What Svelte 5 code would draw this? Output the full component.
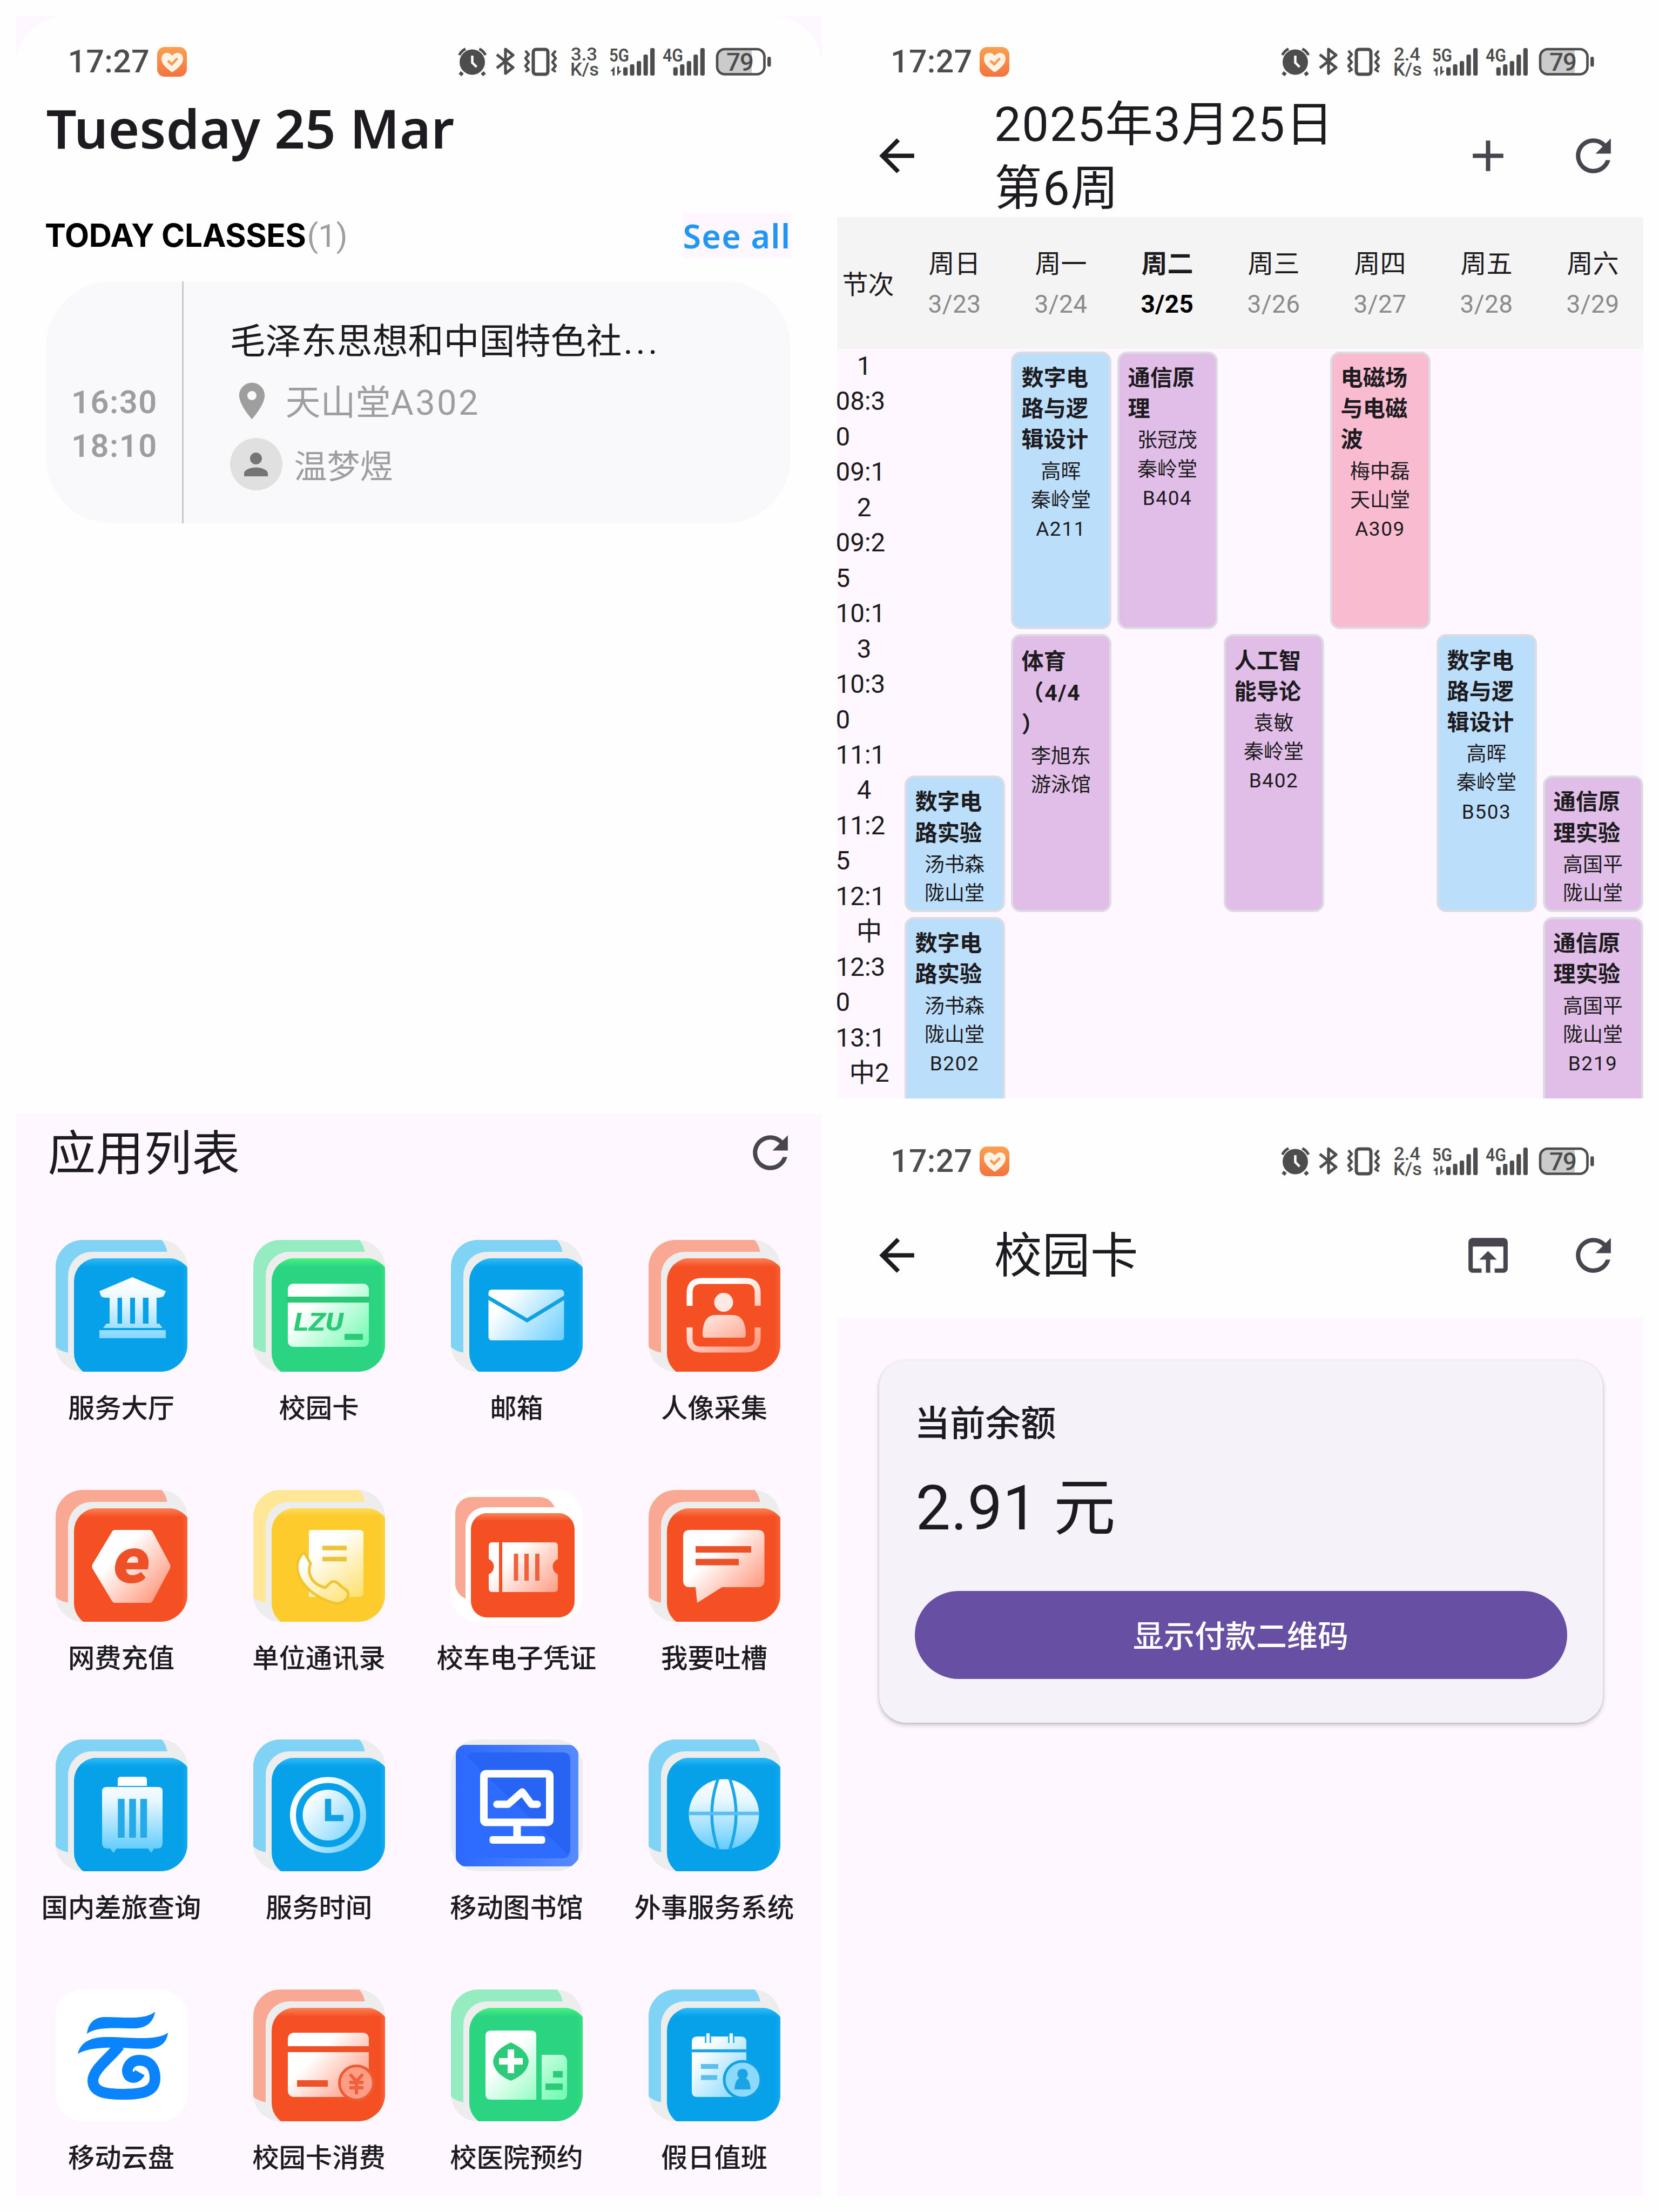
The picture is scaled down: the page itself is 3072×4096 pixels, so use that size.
<script>
  const days = [
    { name: '周日', date: '3/23' },
    { name: '周一', date: '3/24' },
    { name: '周二', date: '3/25', today: true },
    { name: '周三', date: '3/26' },
    { name: '周四', date: '3/27' },
    { name: '周五', date: '3/28' },
    { name: '周六', date: '3/29' }
  ];

  const periods = [
    { label: '1', lines: ['08:3', '0', '09:1'] },
    { label: '2', lines: ['09:2', '5', '10:1'] },
    { label: '3', lines: ['10:3', '0', '11:1'] },
    { label: '4', lines: ['11:2', '5', '12:1'] },
    { label: '中', wide: true, lines: ['12:3', '0', '13:1'] },
    { label: '中2', wide: true, lines: [] }
  ];

  const lessons = [
    { col: 2, row: 1, span: 2, tone: 'blue', title: ['数字电', '路与逻', '辑设计'], info: ['高晖', '秦岭堂', 'A211'] },
    { col: 3, row: 1, span: 2, tone: 'purple', title: ['通信原', '理'], info: ['张冠茂', '秦岭堂', 'B404'] },
    { col: 5, row: 1, span: 2, tone: 'pink', title: ['电磁场', '与电磁', '波'], info: ['梅中磊', '天山堂', 'A309'] },
    { col: 2, row: 3, span: 2, tone: 'purple', tall: true, title: ['体育', '（4/4', '）'], info: ['李旭东', '游泳馆'] },
    { col: 4, row: 3, span: 2, tone: 'purple', title: ['人工智', '能导论'], info: ['袁敏', '秦岭堂', 'B402'] },
    { col: 6, row: 3, span: 2, tone: 'blue', title: ['数字电', '路与逻', '辑设计'], info: ['高晖', '秦岭堂', 'B503'] },
    { col: 1, row: 4, span: 1, tone: 'blue', title: ['数字电', '路实验'], info: ['汤书森', '陇山堂'] },
    { col: 7, row: 4, span: 1, tone: 'purple', title: ['通信原', '理实验'], info: ['高国平', '陇山堂'] },
    { col: 1, row: 5, span: 2, tone: 'blue', title: ['数字电', '路实验'], info: ['汤书森', '陇山堂', 'B202'] },
    { col: 7, row: 5, span: 2, tone: 'purple', title: ['通信原', '理实验'], info: ['高国平', '陇山堂', 'B219'] }
  ];

  const palette = {
    blue: { back: '#80d3f4', front: '#06a1e9', edge: '#2ebcf9' },
    green: { back: '#95ecc0', front: '#2ad480', edge: '#46f480' },
    orange: { back: '#f9a993', front: '#f45024', edge: '#fb8155' },
    yellow: { back: '#ffe797', front: '#fdcb2c', edge: '#fedc58' }
  };

  const apps = [
    { name: '服务大厅', icon: 'bank', tone: 'blue' },
    { name: '校园卡', icon: 'card', tone: 'green' },
    { name: '邮箱', icon: 'mail', tone: 'blue' },
    { name: '人像采集', icon: 'face', tone: 'orange' },
    { name: '网费充值', icon: 'net', tone: 'orange' },
    { name: '单位通讯录', icon: 'contacts', tone: 'yellow' },
    { name: '校车电子凭证', icon: 'ticket' },
    { name: '我要吐槽', icon: 'chat', tone: 'orange' },
    { name: '国内差旅查询', icon: 'luggage', tone: 'blue' },
    { name: '服务时间', icon: 'clock', tone: 'blue' },
    { name: '移动图书馆', icon: 'library' },
    { name: '外事服务系统', icon: 'globe', tone: 'blue' },
    { name: '移动云盘', icon: 'cloud' },
    { name: '校园卡消费', icon: 'spend', tone: 'orange' },
    { name: '校医院预约', icon: 'hospital', tone: 'green' },
    { name: '假日值班', icon: 'duty', tone: 'blue' }
  ];

  const bars = [15.5, 21, 27, 39, 51];
</script>

{#snippet statusBar(speed)}
  <div class="status">
    <span class="clock">17:27</span>
    <svg class="health" viewBox="0 0 55 55">
      <rect width="55" height="55" rx="14" fill="url(#gHealth)" />
      <path d="M28 47C20 41 8 33 8 21.500C8 15 12.500 11 18 11C22 11 26 13 28 16.500C30 13 34 11 38 11C43.500 11 48 15 48 21.500C48 33 36 41 28 47Z" fill="#fff3e6" />
      <path d="M20 25.500L27 32L37.500 21" fill="none" stroke="#f99a50" stroke-width="4.500" />
    </svg>
    <svg class="indicators" viewBox="848 76 582 76" fill="#4d4d4d">
      <path d="M856 134l-4 5M893 134l4 5" stroke="#4d4d4d" stroke-width="7" />
      <circle cx="874.500" cy="115" r="23.500" />
      <path d="M850.500 102A25 25 0 0 1 862 90.500M899 102A25 25 0 0 0 887.500 90.500" fill="none" stroke="#4d4d4d" stroke-width="5" />
      <path d="M874.500 103v13l8 8" fill="none" stroke="#fefefe" stroke-width="4.500" />
      <path d="M920 101L950 125L936 136V91L950 102L920 126" fill="none" stroke="#4d4d4d" stroke-width="5.200" stroke-linejoin="round" />
      <rect x="987.500" y="91.500" width="27" height="46" rx="5" fill="none" stroke="#4d4d4d" stroke-width="6" />
      <path d="M973 94l6 7-6 7 6 7-6 7 6 7-6 4M1029 94l-6 7 6 7-6 7 6 7-6 7 6 4" fill="none" stroke="#4d4d4d" stroke-width="4.500" stroke-linejoin="round" />
      <text x="1057" y="112" font-size="34" font-weight="500" textLength="49" lengthAdjust="spacingAndGlyphs">{speed}</text>
      <text x="1056" y="140" font-size="34" font-weight="500" textLength="53" lengthAdjust="spacingAndGlyphs">K/s</text>
      <text x="1128" y="114" font-size="34" font-weight="600" textLength="37" lengthAdjust="spacingAndGlyphs">5G</text>
      <path d="M1130 132l8-9v17h-3.500v-8zM1151 131l-8 9v-17h3.500v8z" />
      <text x="1227" y="114" font-size="34" font-weight="600" textLength="38" lengthAdjust="spacingAndGlyphs">4G</text>
      {#each bars as h, i}
        <rect x={1154 + i * 12.5} y={140 - h} width="8.200" height={h} rx="3" />
        <rect x={1246.7 + i * 12.5} y={140 - h} width="8.200" height={h} rx="3" />
      {/each}
      <path d="M1342 91h50v46h-50q-13 0-13-13v-20q0-13 13-13z" fill="#cbcbcb" />
      <rect x="1328" y="91" width="87.500" height="46.500" rx="14" fill="none" stroke="#4d4d4d" stroke-width="4.600" />
      <rect x="1421" y="105" width="6.500" height="18.500" rx="3.200" />
      <text x="1345" y="130.500" font-size="46" font-weight="500" textLength="51">79</text>
    </svg>
  </div>
{/snippet}

{#snippet backIcon()}
  <svg class="tool dark" viewBox="0 0 24 24"><path d="M20 11H7.830l5.590-5.590L12 4l-8 8 8 8 1.410-1.410L7.830 13H20v-2z" /></svg>
{/snippet}

{#snippet refreshIcon()}
  <svg class="tool" viewBox="0 0 24 24"><path d="M17.650 6.350C16.200 4.900 14.210 4 12 4c-4.420 0-7.990 3.580-7.990 8s3.570 8 7.990 8c3.730 0 6.840-2.550 7.730-6h-2.080c-.820 2.330-3.040 4-5.650 4-3.310 0-6-2.690-6-6s2.690-6 6-6c1.660 0 3.140.690 4.220 1.780L13 11h7V4l-2.350 2.350z" /></svg>
{/snippet}

{#snippet glyph(icon)}
  {#if icon === 'bank'}
    <g fill="url(#gBlueV)">
      <path d="M142 69L204 95L200 104Q196 107 190 107H94Q87 107 84 104L81 95ZM100 107h14.600v50H100zM123 107h15v50h-15zM147 107h14.600v50H147zM172 107h15v50h-15zM94 155h98l6 8H88zM81 167h123v15H81z" />
    </g>
  {:else if icon === 'card'}
    <rect x="64" y="81" width="150" height="117" rx="10" fill="url(#gGreenD)" />
    <rect x="62" y="105" width="154" height="11" fill="#2bc878" />
    <text x="75" y="168" font-size="46" font-weight="800" font-style="italic" fill="#2cc979" textLength="92" lengthAdjust="spacingAndGlyphs">LZU</text>
    <rect x="169" y="174" width="34" height="11" fill="#2cc979" />
  {:else if icon === 'mail'}
    <rect x="69.500" y="92" width="140" height="94" rx="6" fill="url(#gBlueD)" />
    <path d="M66 105L141 149L213 105" fill="none" stroke="#12a0e4" stroke-width="7" />
  {:else if icon === 'face'}
    <path d="M76 122V98Q76 76 98 76H180Q202 76 202 98V122M76 162V182Q76 203 98 203H180Q202 203 202 182V162" fill="none" stroke="url(#gOrangeU)" stroke-width="11" />
    <circle cx="139" cy="115.500" r="17.500" fill="#ffe9e3" />
    <path d="M100 176Q100 139 124 139H155Q180 139 180 176Q180 181 175 181H105Q100 181 100 176Z" fill="url(#gOrangeU)" />
  {:else if icon === 'net'}
    <path d="M110 74H174Q178 74 180 78L212 138Q213 141 212 145L180 205Q178 209 174 209H110Q106 209 104 205L68 145Q67 141 68 138L104 78Q106 74 110 74Z" fill="url(#gOrangeD)" />
    <text x="107" y="172" font-size="119" font-weight="900" font-style="italic" fill="#ee5127" textLength="68" lengthAdjust="spacingAndGlyphs">e</text>
  {:else if icon === 'contacts'}
    <path d="M107 74H197Q204 74 204 81V190Q204 198 196 198H103V78Q103 74 107 74Z" fill="url(#gYellowD)" />
    <path d="M128 107.500h45M128 128h45" stroke="#ebc33d" stroke-width="8.500" />
    <path d="M94 115L106 136Q101 150 106 160Q112 175 133 181L145 170Q153 168 160 176L175 188Q178 200 168 206Q160 212 148 209Q106 196 88 166Q72 136 94 115Z" fill="url(#gYellowD)" stroke="#f0c531" stroke-width="5" />
  {:else if icon === 'chat'}
    <path d="M76 74H202Q214.500 74 214.500 86V168Q214.500 180 202 180H136L90 209L87 180H76Q64 180 64 168V86Q64 74 76 74Z" fill="url(#gOrangeD)" />
    <path d="M87 110h103M87 133.500h80" stroke="#ec5229" stroke-width="12" />
  {:else if icon === 'luggage'}
    <g fill="url(#gBlueV)">
      <path d="M115 86V74Q115 69 122 69H163Q169 69 169 74V86ZM94 88H190Q198 88 198 96V192Q198 202 188 202H182L177 210L171 202H113L107 210L101 202H96Q86 202 86 192V96Q86 88 94 88Z" />
    </g>
    <path d="M121.500 110v72M142.500 110v72M163 110v72" stroke="#24a9e9" stroke-width="12.500" />
  {:else if icon === 'clock'}
    <circle cx="138.500" cy="140" r="65" fill="none" stroke="url(#gBlueD)" stroke-width="11" />
    <circle cx="138.500" cy="140" r="47" fill="url(#gBlueD)" />
    <path d="M138.500 110V145.500H167" fill="none" stroke="#12a0e4" stroke-width="11.500" />
  {:else if icon === 'globe'}
    <circle cx="139.500" cy="138.500" r="65" fill="url(#gBlueV)" />
    <path d="M129 72Q105 138 129 205M150 72Q174 138 150 205" fill="none" stroke="#1aa6ea" stroke-width="5.500" />
    <path d="M74 137h131" stroke="#58bfee" stroke-width="6.500" />
  {:else if icon === 'spend'}
    <rect x="64" y="80" width="150" height="119" rx="11" fill="url(#gOrangeD)" />
    <rect x="62" y="105" width="154" height="11" fill="#ec5128" />
    <rect x="81" y="168" width="57" height="12" fill="#ec5128" />
    <circle cx="191" cy="173" r="31.500" fill="#ff9d85" stroke="#ef5a34" stroke-width="5" />
    <path d="M179 157l12 13 12-13M191 170v24M178 172h26M178 182h26" fill="none" stroke="#f0603c" stroke-width="6" />
  {:else if icon === 'hospital'}
    <path d="M74 76H149Q158 76 158 85V204H74Q64 204 64 194V86Q64 76 74 76ZM168 121H204Q215 121 215 134V194Q215 204 205 204H168Z" fill="url(#gGreenD)" />
    <path d="M111 98Q142 112 144 133Q142 156 111 169Q80 156 78 133Q80 112 111 98Z" fill="#2bcb7a" />
    <path d="M111 111v44M89 133h44" stroke="#fff" stroke-width="12" />
    <path d="M189 157h18M175 180h32" stroke="#2bcb7a" stroke-width="12" />
  {:else if icon === 'duty'}
    <path d="M90 87H171Q181 87 181 97V199H90Q80 199 80 189V97Q80 87 90 87Z" fill="url(#gBlueD)" />
    <path d="M105.500 85v14M114.500 85v14M148.500 85v14M157.500 85v14" stroke="#36b2ec" stroke-width="3" />
    <path d="M110 81v18M153 81v18" stroke="#e9f8ff" stroke-width="6" />
    <path d="M78 113.500h105" stroke="#18a4e6" stroke-width="5.500" />
    <path d="M97 142.500h32M97 163h30" stroke="#5cc0ee" stroke-width="9" />
    <circle cx="174" cy="167" r="34" fill="#8bdafd" stroke="#12a0e4" stroke-width="5" />
    <path d="M174 147a9.500 9.500 0 0 1 6 17q8 4 9 21h-30q1-17 9-21a9.500 9.500 0 0 1 6-17z" fill="#1ba3e3" />
  {/if}
{/snippet}

<svg class="defs" width="0" height="0" aria-hidden="true">
  <defs>
    <linearGradient id="gHealth" x2="0" y2="1"><stop stop-color="#fca050" /><stop offset="1" stop-color="#f27440" /></linearGradient>
    <linearGradient id="gBlueV" gradientUnits="userSpaceOnUse" x1="140" y1="75" x2="140" y2="205"><stop stop-color="#fff" /><stop offset=".3" stop-color="#e6f7ff" /><stop offset="1" stop-color="#62ccff" /></linearGradient>
    <linearGradient id="gBlueD" gradientUnits="userSpaceOnUse" x1="85" y1="95" x2="200" y2="190"><stop offset=".15" stop-color="#fff" /><stop offset="1" stop-color="#6ed0ff" /></linearGradient>
    <linearGradient id="gGreenD" gradientUnits="userSpaceOnUse" x1="80" y1="85" x2="200" y2="200"><stop offset=".25" stop-color="#fff" /><stop offset="1" stop-color="#78fbb4" /></linearGradient>
    <linearGradient id="gOrangeD" gradientUnits="userSpaceOnUse" x1="80" y1="85" x2="200" y2="200"><stop offset=".3" stop-color="#fff" /><stop offset="1" stop-color="#ff9478" /></linearGradient>
    <linearGradient id="gOrangeU" gradientUnits="userSpaceOnUse" x1="100" y1="70" x2="180" y2="208"><stop offset=".2" stop-color="#fff" /><stop offset="1" stop-color="#ff9a80" /></linearGradient>
    <linearGradient id="gYellowD" gradientUnits="userSpaceOnUse" x1="100" y1="85" x2="190" y2="205"><stop offset=".25" stop-color="#fff" /><stop offset="1" stop-color="#ffe06d" /></linearGradient>
    <linearGradient id="gLibrary"><stop stop-color="#2c68ff" /><stop offset="1" stop-color="#568bff" /></linearGradient>
    {#each Object.entries(palette) as [key, c]}
      <linearGradient id="top-{key}" x2="0" y2="1"><stop stop-color={c.edge} /><stop offset="1" stop-color={c.edge} stop-opacity="0" /></linearGradient>
      <linearGradient id="side-{key}" x1="1" x2="0"><stop stop-color={c.edge} /><stop offset="1" stop-color={c.edge} stop-opacity="0" /></linearGradient>
    {/each}
    <clipPath id="tileClip"><rect width="244" height="244" rx="50" /></clipPath>
    <clipPath id="frontClip"><rect x="34" y="34" width="218" height="218" rx="42" /></clipPath>
    <clipPath id="ticketClip"><rect x="37" y="43" width="192" height="193" rx="30" /></clipPath>
  </defs>
</svg>

<main class="board">
  <section class="panel home">
    <div class="sheet">
      {@render statusBar('3.3')}
      <h1>Tuesday 25 Mar</h1>
      <div class="section-head">
        <h2>TODAY CLASSES<span>(1)</span></h2>
        <a class="see-all" href="#all">See all</a>
      </div>
      <article class="class-card">
        <div class="times"><span>16:30</span><span>18:10</span></div>
        <div class="details">
          <div class="course">毛泽东思想和中国特色社<span class="dots">...</span></div>
          <div class="place">
            <svg viewBox="0 0 24 24"><path d="M12 2C8.130 2 5 5.130 5 9c0 5.250 7 13 7 13s7-7.750 7-13c0-3.870-3.130-7-7-7zm0 9.500c-1.380 0-2.500-1.120-2.500-2.500s1.120-2.500 2.500-2.500 2.500 1.120 2.500 2.500-1.120 2.500-2.500 2.500z" /></svg>
            <span>天山堂<span class="latin">A302</span></span>
          </div>
          <div class="teacher">
            <span class="avatar">
              <svg viewBox="0 0 24 24"><path d="M12 12c2.210 0 4-1.790 4-4s-1.790-4-4-4-4 1.790-4 4 1.790 4 4 4zm0 2c-2.670 0-8 1.340-8 4v2h16v-2c0-2.660-5.330-4-8-4z" /></svg>
            </span>
            <span>温梦煜</span>
          </div>
        </div>
      </article>
    </div>
  </section>

  <section class="panel timetable">
    {@render statusBar('2.4')}
    <header class="toolbar">
      {@render backIcon()}
      <div class="title">2025年3月25日<br />第6周</div>
      <svg class="tool" viewBox="0 0 24 24"><path d="M19 13h-6v6h-2v-6H5v-2h6V5h2v6h6v2z" /></svg>
      {@render refreshIcon()}
    </header>
    <div class="week">
      <span class="corner">节次</span>
      {#each days as day}
        <div class="day" class:today={day.today}>
          <span>{day.name}</span>
          <span class="date">{day.date}</span>
        </div>
      {/each}
    </div>
    <div class="schedule">
      <div class="periods">
        {#each periods as p}
          <div class="period">
            <span class="label" class:wide={p.wide}>{p.label}</span>
            {#each p.lines as line}<span>{line}</span>{/each}
          </div>
        {/each}
      </div>
      <div class="lessons">
        {#each lessons as l}
          <article class="lesson {l.tone}" class:tall={l.tall} style="grid-column: {l.col}; grid-row: {l.row} / span {l.span}">
            <div class="name">{#each l.title as t}<span>{t}</span>{/each}</div>
            <div class="info">{#each l.info as t}<span class:room={/\d/.test(t)}>{t}</span>{/each}</div>
          </article>
        {/each}
      </div>
    </div>
  </section>

  <section class="panel apps">
    <header class="apps-head">
      <div class="title">应用列表</div>
      {@render refreshIcon()}
    </header>
    <div class="app-grid">
      {#each apps as app}
        <div class="app">
          <svg class="tile" viewBox="0 0 244 244">
            <g clip-path="url(#tileClip)">
              {#if app.tone}
                {@const c = palette[app.tone]}
                <rect width="244" height="244" fill="#ededed" />
                <rect x="-14" y="-14" width="221" height="223" rx="42" fill={c.back} />
                <rect x="23" y="22" width="240" height="240" rx="44" fill="#ededed" />
                <g clip-path="url(#frontClip)">
                  <rect x="34" y="34" width="218" height="218" fill={c.front} />
                  <rect x="34" y="34" width="218" height="16" fill="url(#top-{app.tone})" />
                  <rect x="234" y="34" width="18" height="218" fill="url(#side-{app.tone})" opacity=".7" />
                </g>
                {@render glyph(app.icon)}
              {:else if app.icon === 'ticket'}
                <rect width="244" height="244" fill="#fff" />
                <rect x="8" y="13" width="186" height="190" rx="30" fill="#f9a993" />
                <rect x="27" y="32" width="200" height="200" rx="36" fill="#fff" />
                <g clip-path="url(#ticketClip)">
                  <rect x="37" y="43" width="192" height="193" fill="#f45024" />
                  <rect x="37" y="43" width="192" height="14" fill="url(#top-orange)" />
                </g>
                <path d="M76 97H191Q198 97 198 104V128A15 15 0 0 0 198 156V182Q198 189 191 189H76Q70 189 70 182V156A15 15 0 0 0 70 128V104Q70 97 76 97Z" fill="url(#gOrangeD)" />
                <path d="M92 94v98" stroke="#f45024" stroke-width="6" />
                <path d="M120.500 118v50M140 118v50M160 118v50" stroke="#f0603a" stroke-width="8" />
              {:else if app.icon === 'library'}
                <rect width="244" height="244" fill="#ededed" />
                <rect x="9" y="10" width="227" height="225" rx="18" fill="url(#gLibrary)" />
                <rect x="24" y="24" width="197" height="196" rx="14" fill="#2e6bff" />
                <path d="M38 24H207Q221 24 221 38V206L215 212L30 32Z" fill="#2864f3" />
                <rect x="61" y="63.500" width="122" height="90" rx="4" fill="none" stroke="#fff" stroke-width="14" />
                <path d="M85 120H106L132 97L149 120H160" fill="none" stroke="#fff" stroke-width="13.500" stroke-linecap="round" stroke-linejoin="round" />
                <path d="M122.500 150v38" stroke="#fff" stroke-width="14" />
                <rect x="71.500" y="179" width="103" height="14" rx="5" fill="#fff" />
              {:else}
                <rect width="244" height="244" fill="#fff" />
                <path d="M58 82C60 66 68 52 90 51C120 50 165 58 184 41C182 58 170 72 145 72C112 72 76 68 58 82Z" fill="#0a84fc" />
                <path d="M41 119C46 100 60 89 92 88C130 87 185 97 208 80C206 98 194 110 168 110C128 109 70 102 41 119Z" fill="#0a84fc" />
                <path d="M118 104C102 126 68 148 69 170C70 190 92 194 125 194C160 194 184 190 184 164C184 142 172 131 155 131C138 131 130 146 134 156C138 166 150 165 156 154" fill="none" stroke="#0a84fc" stroke-width="20" />
              {/if}
            </g>
          </svg>
          <span class="app-name">{app.name}</span>
        </div>
      {/each}
    </div>
  </section>

  <section class="panel wallet">
    <div class="top">
      {@render statusBar('2.4')}
      <header class="toolbar">
        {@render backIcon()}
        <div class="title">校园卡</div>
        <svg class="tool" viewBox="0 0 24 24"><path d="M19 4H5c-1.110 0-2 .900-2 2v12c0 1.100.890 2 2 2h4v-2H5V8h14v10h-4v2h4c1.100 0 2-.900 2-2V6c0-1.100-.890-2-2-2zm-7 6l-4 4h3v6h2v-6h3l-4-4z" /></svg>
        {@render refreshIcon()}
      </header>
    </div>
    <article class="balance">
      <div class="caption">当前余额</div>
      <div class="amount">2.91 元</div>
      <button>显示付款二维码</button>
    </article>
  </section>
</main>

<style>
  :global(body) {
    margin: 0;
    background: #fefefe;
  }
  .defs {
    position: absolute;
  }
  .board {
    box-sizing: border-box;
    width: 3072px;
    height: 4096px;
    padding: 28.5px;
    display: grid;
    grid-template-columns: 1493px 1493px;
    grid-template-rows: 2005px 2005px;
    gap: 28.5px 28.500px;
    background: #fefefe;
    color: #1d1b20;
    font-family: Roboto, 'Noto Sans CJK SC', sans-serif;
  }
  .panel {
    overflow: hidden;
    background: #fef7ff;
  }

  /* status bar */
  .status {
    display: flex;
    align-items: center;
    height: 56px;
    padding: 57.5px 0 0 99px;
  }
  .home .status {
    padding-left: 97px;
  }
  .clock {
    width: 165px;
    font-size: 59px;
    line-height: 56px;
    letter-spacing: 0.4px;
    font-weight: 500;
    color: #4d4d4d;
  }
  .health {
    width: 55px;
    height: 55px;
  }
  .indicators {
    flex: none;
    width: 582px;
    height: 76px;
    margin-left: 502.5px;
    overflow: visible;
  }

  /* app bars */
  .toolbar {
    display: flex;
    align-items: center;
    height: 227px;
    margin-top: 33px;
    padding: 0 44px 0 62px;
  }
  .tool {
    flex: none;
    width: 97px;
    height: 97px;
    fill: #49454f;
  }
  .tool.dark {
    fill: #1d1b20;
  }
  .title {
    padding-top: 4px;
    font-size: 88.500px;
    line-height: 117.5px;
    letter-spacing: 0.500px;
  }
  .toolbar .title {
    flex: 1;
    margin-left: 132px;
  }
  .timetable .title {
    letter-spacing: 1.600px;
  }
  .toolbar .tool + .tool {
    margin-left: 98px;
  }

  /* home */
  .sheet {
    height: 100%;
    border-radius: 95px 95px 0 0;
    background: #fefefe;
  }
  h1 {
    margin: 35px 0 0 57px;
    font: 600 99px/120px 'Noto Sans', sans-serif;
    letter-spacing: 0.200px;
    white-space: nowrap;
  }
  .section-head {
    display: flex;
    align-items: center;
    justify-content: space-between;
    margin: 96px 57px 0 54.500px;
  }
  h2 {
    margin: 0;
    font: 700 58.500px/85px Inter, sans-serif;
    letter-spacing: -0.300px;
    color: #000;
  }
  h2 span {
    font: 400 60px/85px Roboto, sans-serif;
    letter-spacing: 0;
    color: #9e9e9e;
    margin-left: 2px;
  }
  .see-all {
    background: #fef7ff;
    color: #2196f3;
    font: 600 61px/85px 'Noto Sans', sans-serif;
    letter-spacing: 1.300px;
    text-decoration: none;
  }
  .class-card {
    display: flex;
    height: 447.500px;
    margin: 42px 57.5px 0 56.5px;
    border-radius: 122px;
    background: #f9f9fb;
  }
  .times {
    display: flex;
    flex-direction: column;
    box-sizing: border-box;
    width: 254.500px;
    padding: 184px 0 0 47px;
    border-right: 3.500px solid #cacaca;
    font-size: 59.500px;
    line-height: 81px;
    letter-spacing: 1.5px;
    font-weight: 600;
    color: #9e9e9e;
  }
  .details {
    padding: 60.500px 0 0 86px;
    color: #9e9e9e;
  }
  .course {
    font-size: 66px;
    line-height: 102px;
    color: #1d1b20;
  }
  .dots {
    margin-left: 3px;
    letter-spacing: 5.500px;
  }
  .place {
    display: flex;
    align-items: center;
    height: 82px;
    margin-top: 17.500px;
    font-size: 65px;
  }
  .place > span {
    margin-top: -5px;
  }
  .place svg {
    width: 81px;
    height: 81px;
    fill: #9e9e9e;
    margin-right: 22px;
  }
  .latin {
    letter-spacing: 3.300px;
  }
  .teacher {
    display: flex;
    align-items: center;
    margin-top: 28px;
    font-size: 61px;
  }
  .avatar {
    display: flex;
    align-items: center;
    justify-content: center;
    width: 97px;
    height: 97px;
    margin-right: 22px;
    border-radius: 50%;
    background: #e0e0e0;
  }
  .avatar svg {
    width: 66px;
    height: 66px;
    fill: #757575;
  }

  /* timetable */
  .timetable {
    display: flex;
    flex-direction: column;
    background: linear-gradient(#fefefe 373px, #fef7ff 373px);
  }
  .timetable .status,
  .timetable .toolbar,
  .week {
    flex: none;
  }
  .week {
    display: grid;
    grid-template-columns: 119px repeat(7, 197px);
    align-items: center;
    height: 244px;
    background: #f4f4f4;
    font-size: 48px;
  }
  .corner {
    padding: 0 4px 3px 0;
    text-align: center;
  }
  .day {
    display: flex;
    flex-direction: column;
    align-items: center;
    padding-top: 4px;
    line-height: 74px;
  }
  .date {
    font-size: 46px;
    letter-spacing: 0.400px;
    color: #8b8b8b;
  }
  .today {
    font-weight: 700;
  }
  .today .date {
    color: #000;
  }
  .schedule {
    display: flex;
    flex: 1;
    min-height: 0;
  }
  .periods {
    flex: none;
    width: 119px;
  }
  .period {
    display: flex;
    flex-direction: column;
    height: 261.800px;
    font-size: 47.500px;
    line-height: 65.450px;
    text-indent: -2.500px;
  }
  .period .label {
    padding-right: 19px;
    text-align: center;
    text-indent: 0;
  }
  .period .wide {
    padding-right: 0;
  }
  .lessons {
    flex: none;
    display: grid;
    grid-template-columns: repeat(7, 197px);
    grid-template-rows: repeat(6, 261.800px);
  }
  .lesson {
    box-sizing: border-box;
    overflow: hidden;
    margin: 4.500px 5.500px;
    padding: 17.500px 0 0 16px;
    border: 4.500px solid #dddce2;
    border-radius: 18px;
  }
  .blue {
    background: #bbdefb;
  }
  .purple {
    background: #e1bee7;
  }
  .pink {
    background: #f8bbd0;
  }
  .name,
  .info {
    display: flex;
    flex-direction: column;
    white-space: nowrap;
  }
  .name {
    font-size: 41.200px;
    font-weight: 700;
    line-height: 57.200px;
  }
  .tall .name {
    line-height: 58.500px;
  }
  .tall .name span + span {
    letter-spacing: 1.500px;
  }
  .info {
    align-items: center;
    margin: 3px 0 0 -16px;
    font-size: 37px;
    line-height: 53.200px;
  }
  .room {
    letter-spacing: 1.500px;
  }

  /* app list */
  .apps-head {
    display: flex;
    align-items: center;
    justify-content: space-between;
    height: 145px;
    padding: 0 47px 0 60px;
  }
  .apps-head .title {
    padding-top: 6px;
  }
  .app-grid {
    display: grid;
    grid-template-columns: repeat(4, 366px);
    grid-auto-rows: 462.500px;
    padding: 89px 0 0 13px;
  }
  .app {
    display: flex;
    flex-direction: column;
    align-items: center;
  }
  .tile {
    width: 244px;
    height: 244px;
  }
  .app-name {
    margin-top: 31px;
    font-size: 49.300px;
    line-height: 74px;
    font-weight: 500;
    white-space: nowrap;
  }

  /* wallet */
  .top {
    box-sizing: border-box;
    height: 376.500px;
    padding-top: 2.500px;
    background: #fefefe;
  }
  .balance {
    box-sizing: border-box;
    width: 1340px;
    height: 671.500px;
    margin: 80px 0 0 77.500px;
    padding: 68px 66px 0;
    border-radius: 50px;
    background: #f5f2fa;
    box-shadow: 0 4px 8px rgba(0, 0, 0, 0.22), 0 1px 4px rgba(0, 0, 0, 0.1);
  }
  .caption {
    font-size: 65.500px;
    line-height: 100px;
    font-weight: 500;
  }
  .amount {
    margin-top: 31px;
    margin-left: 2px;
    font-size: 115px;
    line-height: 150px;
    letter-spacing: 0.500px;
  }
  button {
    display: block;
    width: 1208px;
    height: 163px;
    margin: 78px 0 0;
    border: 0;
    border-radius: 82px;
    background: #674fa3;
    color: #fff;
    font: 500 57px/163px Roboto, 'Noto Sans CJK SC', sans-serif;
    padding: 3px 0 0;
  }
</style>
